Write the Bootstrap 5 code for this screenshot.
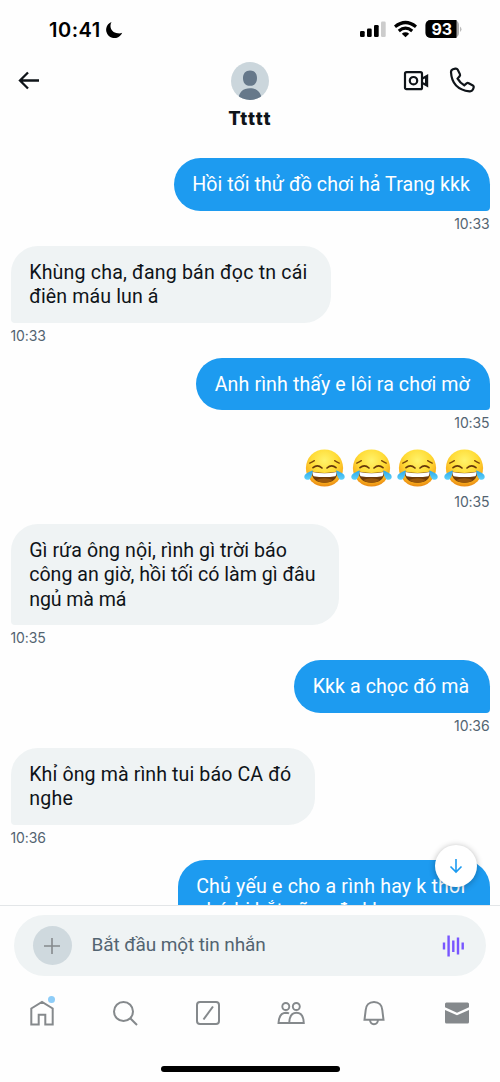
<!DOCTYPE html>
<html lang="vi">
<head>
<meta charset="utf-8">
<meta name="viewport" content="width=device-width, initial-scale=1">
<title>Ttttt</title>
<link rel="stylesheet" href="https://cdn.jsdelivr.net/npm/bootstrap@5.3.0/dist/css/bootstrap.min.css">
<style>
  body{font-family:Roboto,"Noto Sans",sans-serif;color:#0f1419;background:#fefefe}
  .screen{width:500px;height:1082px}
  .status{height:60px;padding:0 38px 0 49px;color:#000}
  .clock{font:600 20px/24px Inter,sans-serif;letter-spacing:.5px}
  .topbar{height:80px}
  .who{font:800 18.5px/22px Inter,sans-serif;letter-spacing:1.4px;margin-top:7px}
  .thread{padding:18.3px 10.5px 0;min-height:0}
  .bubble{padding:15px 0 13.2px 18.7px;border-radius:27px;font-size:19.6px;line-height:24.2px;white-space:nowrap;width:var(--w)}
  .bubble span{display:block;letter-spacing:var(--ls,0)}
  .mine{background:#1d9bf0;color:#fff;border-bottom-right-radius:4px}
  .theirs{background:#eff3f4;border-bottom-left-radius:4px}
  .stamp{font:400 14px/18px Inter,sans-serif;letter-spacing:-.1px;color:#536471;height:35.3px;padding-top:4px}
  .faces{height:43.4px;padding:3px 4.5px 0 0;gap:5.7px}
  .jump{width:42px;height:42px;left:434.5px;top:845px;background:#fff;box-shadow:0 1px 6px rgba(0,0,0,.3)}
  .dock{height:177px;border-top:1px solid #e3e6e8;background:#fefefe;padding-top:9px}
  .composer{height:61px;margin:0 14px;padding:0 20px 0 18.5px;background:#eff3f4;color:#536471;font-size:19px}
  .prompt{letter-spacing:-.1px}
  .plus{width:39px;height:39px;background:#cfd9de;margin-right:20px}
  .tabs{height:73px;padding:0 1px 0 0}
  .tabs svg{display:block}
  .homebar{width:179px;height:6px;background:#000;margin:17px auto 0}
  .newdot{width:7px;height:7px;background:#8ecdf8;left:20px;top:-3px}
</style>
<script src="https://cdn.jsdelivr.net/npm/bootstrap@5.3.0/dist/js/bootstrap.bundle.min.js"></script>
</head>
<body>
<svg width="0" height="0" class="position-absolute">
  <defs>
    <radialGradient id="skin" cx=".5" cy=".3" r=".72"><stop offset="0" stop-color="#fff36b"/><stop offset=".5" stop-color="#ffdb35"/><stop offset=".82" stop-color="#f9ac1c"/><stop offset="1" stop-color="#e58212"/></radialGradient>
    <linearGradient id="tear" x1="0" y1="0" x2="0" y2="1"><stop offset="0" stop-color="#2ba6e8"/><stop offset="1" stop-color="#5fd2fb"/></linearGradient>
    <symbol id="joy" viewBox="0 0 41 38">
      <circle cx="20.5" cy="19" r="18.6" fill="url(#skin)"/>
      <path d="M5.8 14.2Q8.500 12.900 10.400 11.600M35.200 14.200Q32.500 12.900 30.600 11.600" fill="none" stroke="#7c4a0b" stroke-width="1.300" stroke-linecap="round"/>
      <path d="M9 18.600Q13.500 14.800 18 19M23 19Q27.500 14.800 32 18.600" fill="none" stroke="#67380a" stroke-width="1.700" stroke-linecap="round"/>
      <path d="M7.300 22.500Q20.500 25.300 33.700 22.500Q32.700 33.800 20.500 33.800Q8.300 33.800 7.300 22.500Z" fill="#6d3a09"/>
      <path d="M12 31Q20.500 27.700 29 31Q25.500 33.800 20.500 33.800Q15.500 33.800 12 31Z" fill="#99570c"/>
      <path d="M8.300 23Q20.500 25.500 32.700 23Q32.500 26.200 31.300 27.200Q20.500 29 9.700 27.200Q8.500 26.200 8.300 23Z" fill="#fff"/>
      <path d="M8.700 21.300Q8.300 28.300 5.300 30.400Q2.400 31.600.8 29.500Q-.7 26.600 2.300 24.500Q5.600 22.800 8.700 21.300ZM32.300 21.300Q32.700 28.300 35.700 30.400Q38.600 31.600 40.200 29.500Q41.700 26.600 38.700 24.500Q35.400 22.800 32.300 21.300Z" fill="url(#tear)"/>
    </symbol>
  </defs>
</svg>
<main class="screen position-relative overflow-hidden d-flex flex-column">
  <div class="status d-flex align-items-center justify-content-between flex-shrink-0">
    <div class="d-flex align-items-center gap-1"><span class="clock">10:41</span>
      <svg width="18" height="18" viewBox="0 0 18 18"><path d="M6.500 1A8.300 8.300 0 1 0 17.200 11.700C15.800 12.300 14.500 12.500 12.800 12.300C8.500 11.800 5.700 9 5.500 5.200C5.400 3.600 5.800 2.200 6.500 1Z"/></svg></div>
    <div class="d-flex align-items-center">
      <svg width="103" height="20" viewBox="0 0 103 20">
        <rect x="1" y="11" width="4.700" height="6" rx="1.300"/><rect x="8" y="8.500" width="4.700" height="8.500" rx="1.300"/><rect x="15" y="5" width="4.700" height="12" rx="1.300"/><rect x="22" y="1.500" width="4.700" height="15.500" rx="1.300" fill="#ccc"/>
        <g fill="none" stroke="#000" stroke-width="3.200"><path d="M36 6.700Q46.500-1.700 57 6.700M39.800 10.900Q46.500 5.300 53.200 10.900"/></g><path d="M42.800 13.700Q46.500 10.800 50.200 13.700L46.500 17.300Z"/>
        <rect x="66.500" y="0" width="33.500" height="18" rx="5" fill="#aaa"/><path d="M71.500 0H97.500V18H71.500a5 5 0 0 1-5-5V5a5 5 0 0 1 5-5Z"/><path d="M101 6.500Q104 9 101 12Z" fill="#bbb"/>
        <text x="82.800" y="14.800" text-anchor="middle" fill="#fff" font-family="Inter" font-weight="700" font-size="16">93</text>
      </svg></div>
  </div>
  <header class="topbar d-flex justify-content-between flex-shrink-0">
    <div class="col-3"><svg class="ms-3" width="26" height="32" viewBox="0 -10 26 32"><path d="M23 10.500H4M12 2.500L4 10.500L12 18.500" fill="none" stroke="#0f1419" stroke-width="2.300"/></svg></div>
    <div class="text-center d-flex flex-column align-items-center">
      <svg width="38" height="40" viewBox="0 -2 38 40"><clipPath id="av"><circle cx="19" cy="19" r="19"/></clipPath><g clip-path="url(#av)"><path d="M0 0H38V38H0Z" fill="#cbd6dc"/><path d="M19 8.500C14.500 8.500 12 11.500 12 16C12 20.500 14 23.800 19 23.800S26 20.500 26 16C26 11.500 23.500 8.500 19 8.500ZM7 38C8 30 12 26.300 19 26.300S30 30 31 38Z" fill="#66788a"/></g></svg>
      <div class="who">Ttttt</div>
    </div>
    <div class="col-3 d-flex justify-content-end align-items-start">
      <svg width="97" height="35" viewBox="0 -7 97 35"><g fill="none" stroke="#0f1419" stroke-width="2.200"><rect x="2" y="5.200" width="17" height="17" rx="1.500"/><circle cx="10.500" cy="13.700" r="3.700"/></g><path d="M19 10.500L25.200 7V20.500L19 17V14.800L22 16V11.500L19 12.800Z" fill="#0f1419"/>
      <path d="M50.500 2.700L53 2Q54.500 1.700 55.200 3L57.500 7.500Q58 8.700 57.200 9.600L55.200 12Q57.800 16.500 61.800 18.700L64.200 16.700Q65.200 16 66.300 16.600L70.500 18.900Q71.700 19.600 71.300 20.900L70.500 23Q69.500 25 67.200 24.800Q49.500 22.500 48.600 5.600Q48.500 3.500 50.500 2.700Z" transform="translate(-.6 -.4)" fill="none" stroke="#0f1419" stroke-width="2.200"/></svg>
    </div>
  </header>
  <section class="thread flex-grow-1 overflow-hidden d-flex flex-column">
    <div class="bubble mine align-self-end flex-shrink-0" style="--w:316px"><span style="--ls:.06px">Hồi tối thử đồ chơi hả Trang kkk</span></div>
    <div class="stamp text-end flex-shrink-0">10:33</div>
    <div class="bubble theirs align-self-start flex-shrink-0" style="--w:320px"><span style="--ls:.17px">Khùng cha, đang bán đọc tn cái</span><span style="--ls:.1px">điên máu lun á</span></div>
    <div class="stamp flex-shrink-0">10:33</div>
    <div class="bubble mine align-self-end flex-shrink-0" style="--w:293.500px"><span style="--ls:.11px">Anh rình thấy e lôi ra chơi mờ</span></div>
    <div class="stamp text-end flex-shrink-0">10:35</div>
    <div class="faces d-flex justify-content-end flex-shrink-0" role="img" aria-label="😂😂😂😂"><svg width="41" height="38"><use href="#joy"/></svg><svg width="41" height="38"><use href="#joy"/></svg><svg width="41" height="38"><use href="#joy"/></svg><svg width="41" height="38"><use href="#joy"/></svg></div>
    <div class="stamp text-end flex-shrink-0">10:35</div>
    <div class="bubble theirs align-self-start flex-shrink-0" style="--w:328.500px"><span style="--ls:.06px">Gì rứa ông nội, rình gì trời báo</span><span>công an giờ, hồi tối có làm gì đâu</span><span style="--ls:-.1px">ngủ mà má</span></div>
    <div class="stamp flex-shrink-0">10:35</div>
    <div class="bubble mine align-self-end flex-shrink-0" style="--w:195.500px"><span style="--ls:.07px">Kkk a chọc đó mà</span></div>
    <div class="stamp text-end flex-shrink-0">10:36</div>
    <div class="bubble theirs align-self-start flex-shrink-0" style="--w:304px"><span style="--ls:.1px">Khỉ ông mà rình tui báo CA đó</span><span style="--ls:.2px">nghe</span></div>
    <div class="stamp flex-shrink-0">10:36</div>
    <div class="bubble mine align-self-end flex-shrink-0" style="--w:312px"><span style="--ls:.18px">Chủ yếu e cho a rình hay k thôi</span><span>chứ bị bắt cũng đc kk</span></div>
  </section>
  <div class="jump position-absolute rounded-circle d-flex align-items-center justify-content-center"><svg width="14" height="16" viewBox="0 0 14 16"><path d="M7 1V14M1.500 8.500L7 14L12.500 8.500" fill="none" stroke="#1d9bf0" stroke-width="1.600"/></svg></div>
  <footer class="dock flex-shrink-0">
    <div class="composer rounded-pill d-flex align-items-center">
      <span class="plus rounded-circle d-flex align-items-center justify-content-center"><svg width="16" height="16"><path d="M8 0V16M0 8H16" stroke="#85898c" stroke-width="1.600"/></svg></span>
      <span class="me-auto prompt">Bắt đầu một tin nhắn</span>
      <svg width="24" height="22" viewBox="0 0 24 22"><path d="M2 7.500V14.500M6.600.500V21.500M11.300 5.500V17M16 2.500V19.500M20.700 7.500V14.500" stroke="#7856ff" stroke-width="2.400"/></svg>
    </div>
    <nav class="tabs d-flex align-items-center justify-content-around">
      <span class="position-relative"><svg width="28" height="28" viewBox="0 0 28 28"><path d="M3.300 9.500L14 3L24.700 9.500V25.500H17.300V15.800H10.700V25.500H3.300Z" fill="none" stroke="#85898c" stroke-width="2"/></svg><i class="newdot rounded-circle position-absolute"></i></span>
      <svg width="28" height="28" viewBox="0 0 28 28"><g fill="none" stroke="#85898c" stroke-width="2"><circle cx="12.500" cy="12.500" r="9.500"/><path d="M19.200 19.200L26 26"/></g></svg>
      <svg width="28" height="28" viewBox="0 0 28 28"><g fill="none" stroke="#85898c" stroke-width="2"><rect x="3" y="3" width="22" height="22" rx="3"/><path d="M9.500 20.500L19 7.500"/></g></svg>
      <svg width="28" height="28" viewBox="0 0 28 28"><g fill="none" stroke="#85898c" stroke-width="1.900"><circle cx="8.800" cy="7.500" r="3.500"/><circle cx="19.300" cy="7.500" r="3.500"/><path d="M11.700 24H1.500Q2 14 9 13.800Q11 13.800 12 14.500M12.200 24Q12.500 13.800 19.500 13.800T26.800 24Z"/></g></svg>
      <svg width="28" height="28" viewBox="0 0 28 28"><path d="M14 3C9 3 6 6.500 5.700 11L4.500 20.800H23.500L22.300 11C22 6.500 19 3 14 3ZM10 21C10.500 26.500 17.500 26.500 18 21" fill="none" stroke="#85898c" stroke-width="2"/></svg>
      <svg width="28" height="28" viewBox="0 0 28 28"><path d="M2 6V5Q2 3.500 3.500 3.500H24.500Q26 3.500 26 5V8.300L14 13.700L2 8.300ZM2 11L14 16.300L26 11V23Q26 24.500 24.500 24.500H3.500Q2 24.500 2 23Z" fill="#85898c"/></svg>
    </nav>
    <div class="homebar rounded-pill"></div>
  </footer>
</main>
</body>
</html>
